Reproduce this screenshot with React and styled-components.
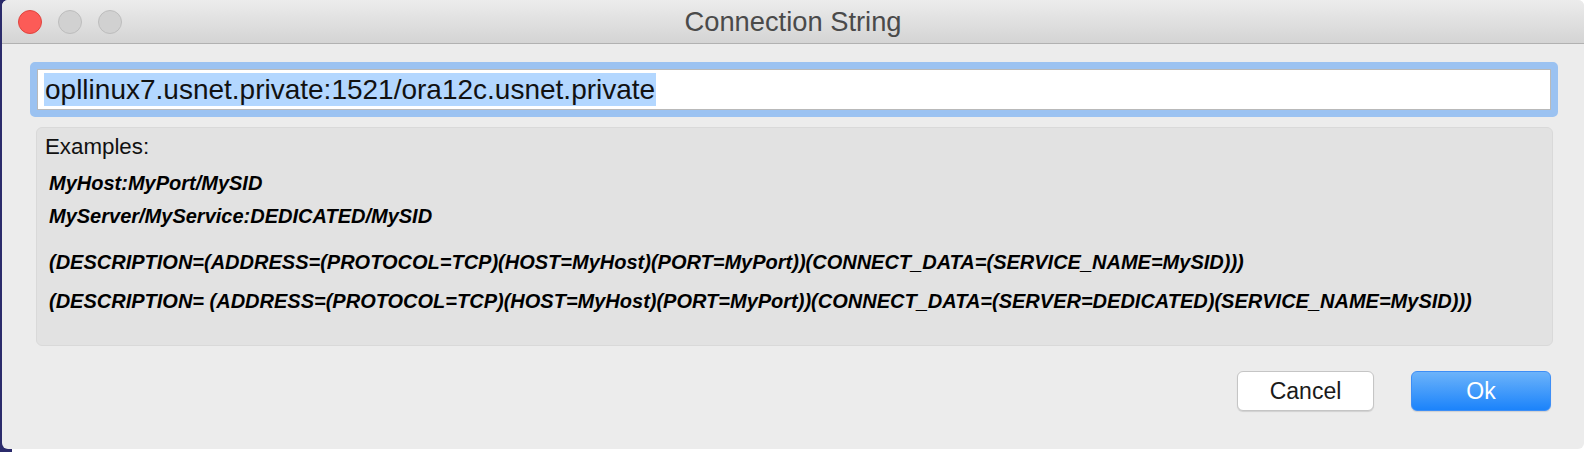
import React from "react";
import styled, { createGlobalStyle } from "styled-components";

const Global = createGlobalStyle`
  html, body { margin: 0; padding: 0; }
  body {
    width: 1586px; height: 452px; overflow: hidden;
    background: linear-gradient(to right, #2b2b6b 0 12px, #ffffff 12px);
    font-family: "Liberation Sans", Arial, sans-serif;
  }
`;

const Window = styled.div`
  margin-left: 2px;
  width: 1582px;
  height: 449px;
  background: #ececec;
  border-radius: 6px;
  display: flex;
  flex-direction: column;
  overflow: hidden;
`;

const TitleBar = styled.div`
  height: 43px;
  flex: none;
  background: linear-gradient(#ececec, #d4d4d4);
  border-bottom: 1px solid #b1b1b1;
  display: flex;
  align-items: center;
  position: relative;
  padding-left: 16px;
  gap: 16px;
`;

const Light = styled.span`
  width: 22px;
  height: 22px;
  border-radius: 50%;
  background: ${(p) => (p.$red ? "#fc5b57" : "#d1d1d1")};
  border: 1px solid ${(p) => (p.$red ? "#e0443e" : "#bdbdbd")};
  flex: none;
`;

const Title = styled.div`
  position: absolute;
  left: 0; right: 0; top: 0; bottom: 0;
  display: flex;
  align-items: center;
  justify-content: center;
  font-size: 27.3px;
  color: #4a4a4a;
  pointer-events: none;
`;

const Body = styled.div`
  flex: 1;
  display: flex;
  flex-direction: column;
  padding: 18px 25px 0 28px;
`;

const FocusRing = styled.div`
  border: 7px solid #9bc2f1;
  border-radius: 5px;
  margin-right: 1px;
`;

const Field = styled.div`
  height: 39px;
  background: #fff;
  border: 1px solid #b9b9b9;
  display: flex;
  align-items: center;
  padding-left: 6px;
`;

const Selected = styled.span`
  background: #b3d7ff;
  color: #111;
  font-size: 28px;
  line-height: 33px;
  padding: 0 1px;
`;

const Examples = styled.div`
  margin: 10px 6px 0 6px;
  height: 219px;
  background: #e2e2e2;
  border: 1px solid #d9d9d9;
  border-radius: 6px;
  padding: 6px 0 0 8px;
  box-sizing: border-box;
  display: flex;
  flex-direction: column;
`;

const Label = styled.div`
  font-size: 22.3px;
  color: #111;
  line-height: 25px;
`;

const Example = styled.div`
  font-size: 20px;
  font-weight: bold;
  font-style: italic;
  color: #000;
  line-height: 24px;
  padding-left: 4px;
  margin-top: ${(p) => p.$gap}px;
`;

const Footer = styled.div`
  display: flex;
  justify-content: flex-end;
  gap: 37px;
  padding-top: 25px;
  padding-right: 8px;
`;

const Button = styled.button`
  width: ${(p) => p.$w}px;
  height: 40px;
  border-radius: 6px;
  font-family: "Liberation Sans", Arial, sans-serif;
  font-size: 23px;
  cursor: pointer;
  border: 1px solid ${(p) => (p.$primary ? "#3d8ef6" : "#c5c5c5")};
  background: ${(p) =>
    p.$primary ? "linear-gradient(#6cb3fa, #1b83fb)" : "#ffffff"};
  color: ${(p) => (p.$primary ? "#fff" : "#1a1a1a")};
  box-shadow: 0 1px 1px rgba(0,0,0,0.12);
`;

export default function App() {
  return (
    <>
      <Global />
      <Window>
        <TitleBar>
          <Light $red />
          <Light />
          <Light />
          <Title>Connection String</Title>
        </TitleBar>
        <Body>
          <FocusRing>
            <Field>
              <Selected>opllinux7.usnet.private:1521/ora12c.usnet.private</Selected>
            </Field>
          </FocusRing>
          <Examples>
            <Label>Examples:</Label>
            <Example $gap={12}>MyHost:MyPort/MySID</Example>
            <Example $gap={9}>MyServer/MyService:DEDICATED/MySID</Example>
            <Example $gap={22}>(DESCRIPTION=(ADDRESS=(PROTOCOL=TCP)(HOST=MyHost)(PORT=MyPort))(CONNECT_DATA=(SERVICE_NAME=MySID)))</Example>
            <Example $gap={15}>(DESCRIPTION= (ADDRESS=(PROTOCOL=TCP)(HOST=MyHost)(PORT=MyPort))(CONNECT_DATA=(SERVER=DEDICATED)(SERVICE_NAME=MySID)))</Example>
          </Examples>
          <Footer>
            <Button $w={137}>Cancel</Button>
            <Button $w={140} $primary>Ok</Button>
          </Footer>
        </Body>
      </Window>
    </>
  );
}
